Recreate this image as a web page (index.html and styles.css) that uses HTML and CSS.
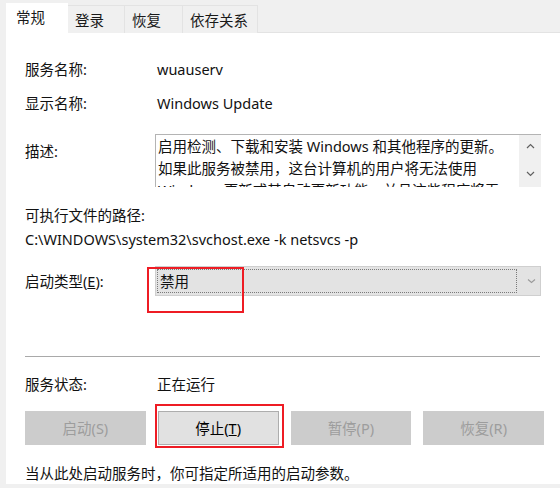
FILE: index.html
```html
<!DOCTYPE html>
<html lang="zh-CN">
<head>
<meta charset="utf-8">
<title>Windows Update 属性</title>
<link rel="stylesheet" href="styles.css">
</head>
<body>
<div class="window">
  <div class="tabs">
    <div class="tab active">常规</div>
    <div class="tab t-login">登录</div>
    <div class="tab t-recover">恢复</div>
    <div class="tab t-deps">依存关系</div>
  </div>
  <div class="panel">
    <div class="row r-name">
      <span class="label">服务名称:</span>
      <span class="value">wuauserv</span>
    </div>
    <div class="row r-display">
      <span class="label">显示名称:</span>
      <span class="value">Windows Update</span>
    </div>
    <div class="row r-desc">
      <span class="label desc-label">描述:</span>
      <div class="desc-box">
        <div class="desc-text">
          <div class="line">启用检测、下载和安装 Windows 和其他程序的更新。</div>
          <div class="line">如果此服务被禁用，这台计算机的用户将无法使用</div>
          <div class="line">Windows 更新或其自动更新功能，并且这些程序将无</div>
        </div>
        <div class="desc-scroll">
          <svg class="chev" width="9" height="6" viewBox="0 0 9 6"><path d="M1 5 L4.5 1.5 L8 5" fill="none" stroke="#606060" stroke-width="1.2"/></svg>
          <svg class="chev" width="9" height="6" viewBox="0 0 9 6"><path d="M1 1 L4.5 4.5 L8 1" fill="none" stroke="#606060" stroke-width="1.2"/></svg>
        </div>
      </div>
    </div>
    <div class="row r-pathlabel">
      <span>可执行文件的路径:</span>
    </div>
    <div class="row r-path">
      <span>C:\WINDOWS\system32\svchost.exe -k netsvcs -p</span>
    </div>
    <div class="row r-startup">
      <span class="label startup-label">启动类型(<u>E</u>):</span>
      <div class="combo">
        <div class="combo-focus">禁用</div>
        <svg class="combo-arrow" width="9" height="6" viewBox="0 0 9 6"><path d="M1 1.5 L4.5 4.5 L8 1.5" fill="none" stroke="#9a9a9a" stroke-width="1.1"/></svg>
        <div class="highlight hl-combo"></div>
      </div>
    </div>
    <div class="separator"></div>
    <div class="row r-status">
      <span class="label">服务状态:</span>
      <span class="value">正在运行</span>
    </div>
    <div class="buttons">
      <div class="btn disabled">启动(S)</div>
      <div class="btn enabled">停止(<u>T</u>)<div class="highlight hl-stop"></div></div>
      <div class="btn disabled">暂停(P)</div>
      <div class="btn disabled">恢复(R)</div>
    </div>
    <div class="row r-hint">
      <span>当从此处启动服务时，你可指定所适用的启动参数。</span>
    </div>
  </div>
</div>
</body>
</html>
```

FILE: styles.css
```css
html, body {
  margin: 0;
  padding: 0;
  background: #f0f0f0;
}

body {
  font-family: "Noto Sans", "Noto Sans CJK SC", sans-serif;
  font-size: 14.5px;
  color: #111;
  width: 560px;
  height: 488px;
  overflow: hidden;
}

.window {
  width: 560px;
  height: 488px;
}

.tabs {
  display: flex;
  align-items: flex-end;
  height: 33px;
  padding-left: 6px;
  box-sizing: border-box;
}

.tab {
  box-sizing: border-box;
  height: 28px;
  line-height: 28px;
  padding-left: 7px;
  background: #f0f0f0;
  border: 1px solid #e3e3e3;
  border-bottom: none;
  border-left: none;
  color: #1a1a1a;
  font-family: "Noto Sans CJK SC", sans-serif;
}

.tab.active {
  width: 62px;
  height: 30px;
  line-height: 28px;
  padding-left: 10px;
  background: #ffffff;
  border: none;
  position: relative;
  z-index: 1;
}

.t-login { width: 57px; }
.t-recover { width: 58px; }
.t-deps { width: 75px; }

.panel {
  margin-left: 6px;
  height: 452px;
  background: #ffffff;
  border-top: 1px solid #e3e3e3;
  box-sizing: border-box;
  padding: 0 19px;
  margin-top: -1px;
  display: flex;
  flex-direction: column;
}

.row {
  display: flex;
  align-items: center;
  line-height: 22px;
  height: 22px;
  white-space: nowrap;
}

.label {
  width: 132px;
  flex: none;
}

.r-name { margin-top: 25px; }
.r-display { margin-top: 12px; }

.r-desc {
  margin-top: 20px;
  height: 53px;
  align-items: flex-start;
}

.desc-label {
  width: 130px;
  padding-top: 6px;
}

.desc-box {
  width: 386px;
  height: 53px;
  display: flex;
  border-top: 1px solid #b4b4b4;
  border-left: 1px solid #b4b4b4;
  box-sizing: border-box;
  overflow: hidden;
}

.desc-text {
  flex: 1;
  padding: 0 0 0 2px;
  overflow: hidden;
}

.line {
  line-height: 22px;
  height: 22px;
  white-space: nowrap;
}

.desc-scroll {
  width: 22px;
  flex: none;
  background: #f0f0f0;
  display: flex;
  flex-direction: column;
  align-items: center;
  padding-top: 8px;
  gap: 22px;
  box-sizing: border-box;
}

.chev { display: block; }

.r-pathlabel { margin-top: 17px; }
.r-path { margin-top: 2px; }

.r-startup {
  margin-top: 16px;
  height: 30px;
}

.startup-label { width: 130px; }

.combo {
  position: relative;
  width: 386px;
  height: 30px;
  box-sizing: border-box;
  background: #e3e3e3;
  border: 1px solid #cfcfcf;
  display: flex;
  align-items: center;
}

.combo-focus {
  margin-left: 1px;
  width: 360px;
  height: 24px;
  line-height: 22px;
  box-sizing: border-box;
  border: 1px dotted #7a7a7a;
  padding-left: 2px;
}

.combo-arrow {
  margin-left: 10px;
}

.highlight {
  position: absolute;
  border: 2px solid #ee1c24;
  box-sizing: border-box;
  pointer-events: none;
}

.hl-combo {
  left: -9px;
  top: 0px;
  width: 97px;
  height: 46px;
}

.separator {
  margin-top: 60px;
  height: 1px;
  border-top: 1px solid #a9a9a9;
  background: #dcdcdc;
  width: 515px;
}

.r-status { margin-top: 16px; }

.buttons {
  margin-top: 16px;
  display: grid;
  grid-template-columns: repeat(4, 1fr);
  column-gap: 12px;
  width: 519px;
  height: 34px;
}

.btn {
  position: relative;
  box-sizing: border-box;
  height: 34px;
  line-height: 32px;
  text-align: center;
  font-family: "Noto Sans", "Noto Sans CJK SC", sans-serif;
}

.btn.disabled {
  background: #cccccc;
  color: #9d9d9d;
  border: 1px solid #cccccc;
}

.btn.enabled {
  background: #e1e1e1;
  border: 1px solid #adadad;
  color: #000;
}

.hl-stop {
  left: -4px;
  top: -8px;
  right: -6px;
  bottom: -4px;
}

.r-hint { margin-top: 17px; }
```
